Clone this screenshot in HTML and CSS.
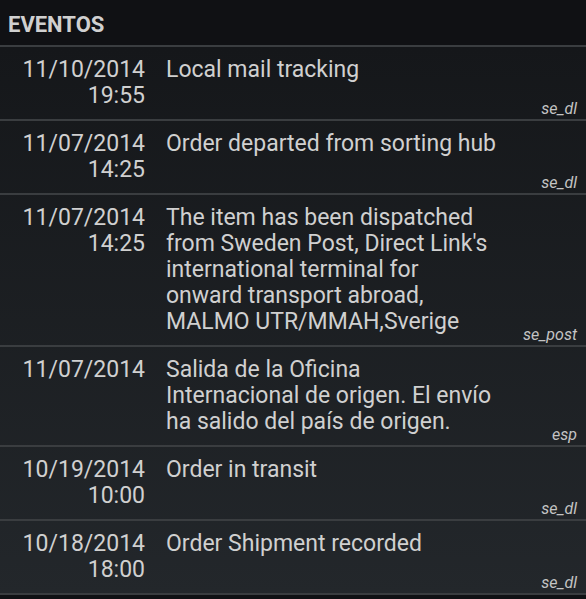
FILE: index.html
```html
<!DOCTYPE html>
<html lang="es">
<head>
  <meta charset="UTF-8">
  <title>Eventos</title>
  <link rel="stylesheet" href="styles.css">
</head>
<body>

  <header class="title">EVENTOS</header>

  <div class="events">
    <div class="event">
      <div class="when">11/10/2014<br>19:55</div>
      <div class="what">Local mail tracking</div>
      <div class="source">se_dl</div>
    </div>
    <div class="event">
      <div class="when">11/07/2014<br>14:25</div>
      <div class="what">Order departed from sorting hub</div>
      <div class="source">se_dl</div>
    </div>
    <div class="event">
      <div class="when">11/07/2014<br>14:25</div>
      <div class="what">The item has been dispatched<br>from Sweden Post, Direct Link's<br>international terminal for<br>onward transport abroad,<br>MALMO UTR/MMAH,Sverige</div>
      <div class="source">se_post</div>
    </div>
    <div class="event">
      <div class="when">11/07/2014</div>
      <div class="what">Salida de la Oficina<br>Internacional de origen. El envío<br>ha salido del país de origen.</div>
      <div class="source">esp</div>
    </div>
    <div class="event">
      <div class="when">10/19/2014<br>10:00</div>
      <div class="what">Order in transit</div>
      <div class="source">se_dl</div>
    </div>
    <div class="event">
      <div class="when">10/18/2014<br>18:00</div>
      <div class="what">Order Shipment recorded</div>
      <div class="source">se_dl</div>
    </div>
  </div>

</body>
</html>
```

FILE: styles.css
```css
body {
  margin: 0;
  font-family: Roboto, 'Noto Sans', sans-serif;
  background: #101114;
  color: #d0d0d0;
  overflow: hidden;
}

.title {
  padding: 12px 8px 0;
  height: 33px;
  font-size: 22px;
  font-weight: bold;
  color: #d0d0d0;
  border-bottom: 2px solid #3a3d40;
}

.events {
  background: linear-gradient(#15171a, #23272b);
}

.event {
  display: grid;
  grid-template-columns: 145px 1fr auto;
  column-gap: 21px;
  padding: 10px 9px 10px 0;
  font-size: 23px;
  line-height: 26px;
  border-bottom: 2px solid #3a3d40;
}

.when {
  text-align: right;
}

.source {
  align-self: end;
  margin-bottom: -9px;
  font-size: 16px;
  font-style: italic;
  line-height: 18px;
  color: #c4c4c4;
}
```
